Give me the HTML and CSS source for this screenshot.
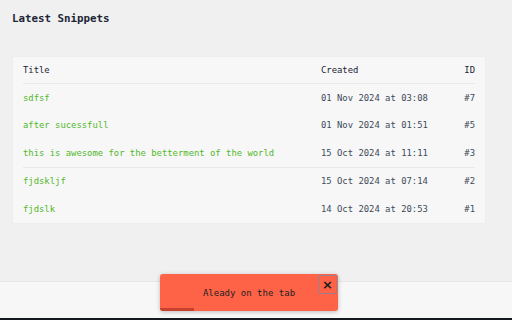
FILE: index.html
```html
<!DOCTYPE html>
<html lang="en">
<head>
    <meta charset="UTF-8">
    <title>Latest Snippets</title>
    <link rel="stylesheet" href="styles.css">
</head>
<body>
    <div class="page">
        <main class="main">
            <h2 class="page-title">Latest Snippets</h2>

            <div class="snippets">
                <div class="row head">
                    <span>Title</span>
                    <span>Created</span>
                    <span class="id">ID</span>
                </div>
                <div class="row">
                    <a href="#">sdfsf</a>
                    <span class="date">01 Nov 2024 at 03:08</span>
                    <span class="id">#7</span>
                </div>
                <div class="row">
                    <a href="#">after sucessfull</a>
                    <span class="date">01 Nov 2024 at 01:51</span>
                    <span class="id">#5</span>
                </div>
                <div class="row">
                    <a href="#">this is awesome for the betterment of the world</a>
                    <span class="date">15 Oct 2024 at 11:11</span>
                    <span class="id">#3</span>
                </div>
                <div class="row split">
                    <a href="#">fjdskljf</a>
                    <span class="date">15 Oct 2024 at 07:14</span>
                    <span class="id">#2</span>
                </div>
                <div class="row">
                    <a href="#">fjdslk</a>
                    <span class="date">14 Oct 2024 at 20:53</span>
                    <span class="id">#1</span>
                </div>
            </div>
        </main>

        <footer class="footer"></footer>
        <div class="bottom-strip"></div>
    </div>

    <!-- toast -->
    <div class="toast">
        <span class="toast-text">Aleady on the tab</span>
        <button class="toast-close">&times;</button>
        <div class="toast-progress"></div>
    </div>
</body>
</html>
```

FILE: styles.css
```css
body {
    margin: 0;
    padding: 0;
    font-family: "DejaVu Sans Mono", monospace;
    background-color: #f0f0f0;
}

.page {
    display: flex;
    flex-direction: column;
    height: 320px;
}

.main {
    flex: 1;
    padding: 12px 26px 0 12px;
}

.page-title {
    margin: 0;
    font-size: 10.8px;
    line-height: 14px;
    font-weight: bold;
    color: #1b2535;
}

.snippets {
    margin-top: 30px;
    background-color: #f7f7f7;
    border: 1px solid #ededed;
    padding: 0 10px 0 10px;
}

.row {
    display: grid;
    grid-template-columns: 298px 1fr 30px;
    align-items: center;
    height: 27.5px;
    font-size: 8.9px;
}

.row.head {
    height: 26px;
    color: #1b2535;
    border-bottom: 1px solid #eaeaea;
}

.row.split {
    border-top: 1px solid #eaeaea;
}

.row a {
    color: #52b82c;
    text-decoration: none;
}

.date {
    color: #3d4a5a;
}

.id {
    text-align: right;
    color: #3d4a5a;
}

.head .id {
    color: #1b2535;
}

.footer {
    height: 36px;
    background-color: #f7f7f7;
    border-top: 1px solid #e6e6e6;
}

.bottom-strip {
    height: 2px;
    background-color: #15181c;
}

.toast {
    position: absolute;
    left: 160px;
    top: 274px;
    width: 178px;
    height: 37px;
    display: flex;
    align-items: center;
    justify-content: center;
    background-color: #fe6347;
    border-radius: 3px;
    box-shadow: 0 1px 4px rgba(0, 0, 0, 0.25);
    overflow: hidden;
}

.toast-text {
    font-size: 9px;
    color: #222;
}

.toast-close {
    position: absolute;
    right: 1px;
    top: 1px;
    width: 19px;
    height: 19px;
    padding: 0;
    border: 1px solid #9a7f8c;
    border-radius: 2px;
    background: transparent;
    font-family: "DejaVu Sans", sans-serif;
    font-size: 13px;
    font-weight: bold;
    line-height: 15px;
    color: #1a1a1a;
}

.toast-progress {
    position: absolute;
    left: 0;
    bottom: 0;
    width: 34px;
    height: 3px;
    background-color: #c8402e;
}
```
